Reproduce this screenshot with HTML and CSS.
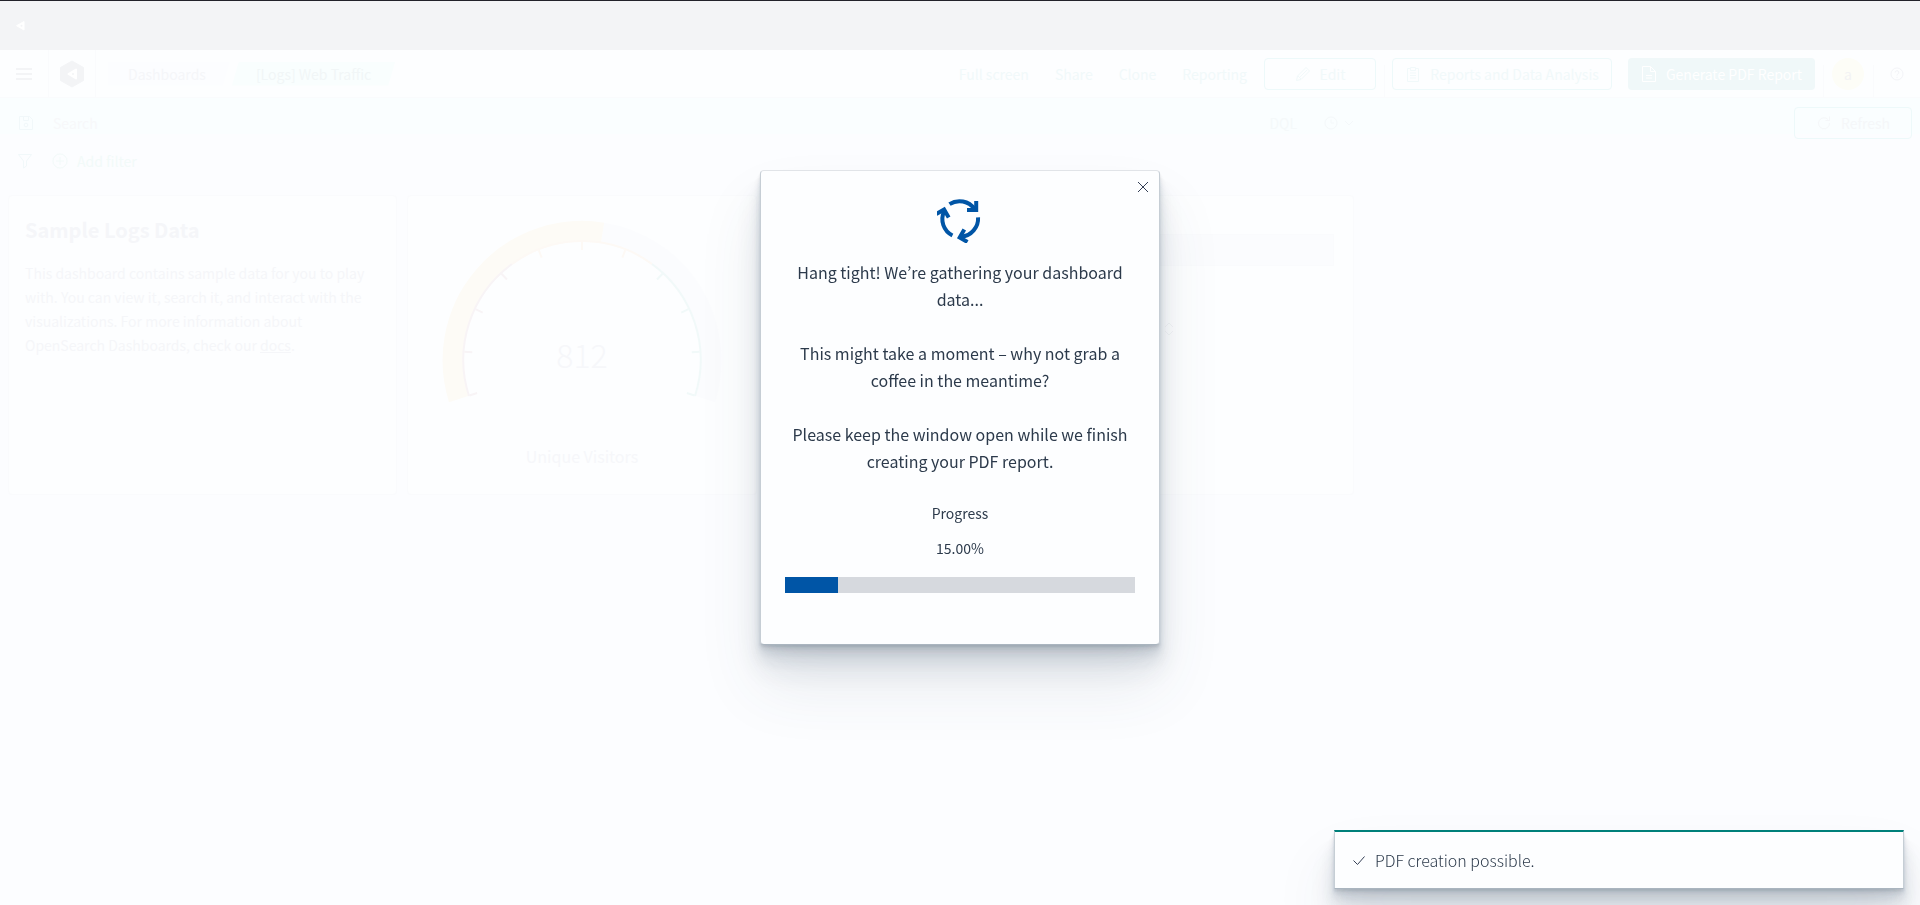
FILE: index.html
```
<!DOCTYPE html>
<html lang="en">
<head>
<meta charset="utf-8">
<title>[Logs] Web Traffic</title>
<link rel="stylesheet" href="styles.css">
</head>
<body>
<div class="page">
  <div class="brandbar">
    <svg width="20" height="20" viewBox="0 0 20 20" aria-hidden="true"><path d="M14 5.500v8.500L6.500 9.700z" fill="#fff" stroke="#fff" stroke-linejoin="round"/><circle cx="11.500" cy="9.700" r="1" fill="#f3f4f6"/></svg>
  </div>
  <header class="header">
    <button class="cell" aria-label="Menu"><svg width="16" height="16" viewBox="0 0 16 16"><path d="M0 3h16M0 8h16M0 13h16" stroke="#f3f4f6" stroke-width="2"/></svg></button>
    <a class="cell logo" href="#" aria-label="Home"><svg width="24" height="28" viewBox="0 0 24 28"><path d="M12 1l11.500 6.500v13L12 27 .5 20.500v-13z" fill="#f3f4f6" stroke="#f3f4f6" stroke-linejoin="round"/><path d="M16 9.500v9L8.500 14z" fill="#fff" stroke="#fff" stroke-width="2" stroke-linejoin="round"/><circle cx="13" cy="14" r="1" fill="#f3f4f6"/></svg></a>
    <nav class="crumbs" aria-label="Breadcrumbs">
      <a class="crumb crumb-first" href="#">Dashboards</a>
      <span class="crumb crumb-last">[Logs] Web Traffic</span>
    </nav>
    <nav class="links" aria-label="Dashboard actions">
      <a href="#">Full screen</a><a href="#">Share</a><a href="#">Clone</a><a href="#">Reporting</a>
    </nav>
    <button class="btn edit"><svg width="16" height="16" viewBox="0 0 16 16"><path d="M1.500 14.500l1-4.500 8.500-8.500 3.500 3.500L6 13.500zM3 10l3 3M4.500 11.500l7.500-7.500" fill="none" stroke="currentColor"/></svg>Edit</button>
    <span class="rule"></span>
    <button class="btn reports"><svg width="16" height="16" viewBox="0 0 16 16"><path d="M5 2.500H2.500v13h11v-13H11M5.500 1.500h5v3h-5zM5 7h6M5 9.500h6M5 12h6" fill="none" stroke="currentColor"/></svg>Reports and Data Analysis</button>
    <button class="btn primary"><svg width="16" height="16" viewBox="0 0 16 16"><path d="M1.500 .5h8l5 5v10h-13zM9.500.5v5h5M5 9.500h6M5 12h6" fill="none" stroke="currentColor"/></svg>Generate PDF Report</button>
    <span class="rule"></span>
    <button class="avatar" aria-label="Account">a</button>
    <span class="rule"></span>
    <button class="cell help" aria-label="Help"><svg width="14" height="14" viewBox="0 0 14 14"><circle cx="7" cy="7" r="6" fill="none" stroke="#f3f4f8"/><path d="M5.200 5.500a1.800 1.800 0 1 1 2.600 1.600Q7 7.500 7 8.500M7 9.800v1.200" fill="none" stroke="#f3f4f8"/></svg></button>
  </header>
  <div class="query">
    <button class="mini" aria-label="Saved queries"><svg width="16" height="16" viewBox="0 0 16 16"><path d="M1.500 1.500h10l3 3v10h-13zM5.500 1.500v4h5v-4" fill="none" stroke="currentColor"/><circle cx="8" cy="10" r="1.800" fill="none" stroke="currentColor"/></svg></button>
    <input class="search" type="text" placeholder="Search" aria-label="Search">
    <button class="dql">DQL</button>
    <button class="time" aria-label="Time range"><svg width="32" height="16" viewBox="0 0 32 16"><circle cx="8" cy="8" r="6" fill="none" stroke="currentColor"/><path d="M8 4.500V8h3M22 6l4 4 4-4" fill="none" stroke="currentColor"/></svg></button>
    <button class="btn refresh"><svg width="16" height="16" viewBox="0 0 16 16"><path d="M12 4.500A5.500 5.500 0 1 0 13.500 8M13.500 1.500v4h-4" fill="none" stroke="currentColor"/></svg>Refresh</button>
  </div>
  <div class="filters">
    <button class="mini" aria-label="Filter options"><svg width="16" height="16" viewBox="0 0 16 16"><path d="M1.500 1.500h13L9.500 8v5l-3 2V8z" fill="none" stroke="currentColor"/></svg></button>
    <button class="add"><svg width="16" height="16" viewBox="0 0 16 16"><circle cx="8" cy="8" r="7" fill="none" stroke="currentColor"/><path d="M8 4v8M4 8h8" stroke="currentColor"/></svg>Add filter</button>
  </div>
  <main class="grid">
    <section class="panel text-panel">
      <h2>Sample Logs Data</h2>
      <p>This dashboard contains sample data for you to play with. You can view it, search it, and interact with the visualizations. For more information about OpenSearch Dashboards, check our <a href="#">docs</a>.</p>
    </section>
    <section class="panel gauge-panel">
      <svg class="gauge" viewBox="-150 -150 300 270" width="300" height="270" role="img" aria-label="Unique Visitors: 812">
        <defs><path id="t" d="M0-118v8"/></defs>
        <path d="M20.500-127A129 129 0 0 1 123 39" fill="none" stroke="#fbfcfe" stroke-width="21"/>
        <path d="M-123 39A129 129 0 0 1 20.500-127" fill="none" stroke="#fdfbf6" stroke-width="21"/>
        <g fill="none" stroke-width="2">
          <g stroke="#f8f4f6"><path d="M-113 36A118.500 118.500 0 0 1-70-96"/><use href="#t" transform="rotate(-107.500)"/><use href="#t" transform="rotate(-86)"/><use href="#t" transform="rotate(-64.500)"/><use href="#t" transform="rotate(-43)"/></g>
          <g stroke="#fdf9f5"><path d="M-70-96A118.500 118.500 0 0 1 70-96"/><use href="#t" transform="rotate(-21.500)"/><use href="#t"/><use href="#t" transform="rotate(21.500)"/></g>
          <g stroke="#f1f9f9"><path d="M70-96A118.500 118.500 0 0 1 113 36"/><use href="#t" transform="rotate(43)"/><use href="#t" transform="rotate(64.500)"/><use href="#t" transform="rotate(86)"/><use href="#t" transform="rotate(107.500)"/></g>
        </g>
        <g fill="#f6f7fa" text-anchor="middle"><text class="gauge-value" y="8">812</text><text class="gauge-label" y="103">Unique Visitors</text></g>
      </svg>
    </section>
    <section class="panel control-panel">
      <div class="control"></div>
      <svg class="sort" width="12" height="14" viewBox="0 0 12 14" aria-hidden="true"><path d="M2 5l4-4 4 4M2 9l4 4 4-4" fill="none" stroke="#f3f5f7"/></svg>
    </section>
  </main>
</div>

<div class="overlay">
  <div class="modal" role="dialog" aria-modal="true" aria-label="Report generation">
    <button class="close" aria-label="Close"><svg width="12" height="12" viewBox="0 0 12 12"><path d="M1 1l10 10M11 1L1 11" stroke="#343f55"/></svg></button>
    <svg class="spinner" width="46" height="46" viewBox="0 0 46 46" aria-hidden="true">
      <defs><g id="arrow"><path d="M12.500 7.200A18.200 18.200 0 0 1 37.500 12" fill="none" stroke="#0055a6" stroke-width="4"/><path d="M37.200 4h4v11H30v-4h7.200z" fill="#0055a6"/></g></defs>
      <use href="#arrow"/><use href="#arrow" transform="rotate(120 23 22)"/><use href="#arrow" transform="rotate(240 23 22)"/>
    </svg>
    <div class="message">
      <p>Hang tight! We’re gathering your dashboard data...</p>
      <p>This might take a moment – why not grab a coffee in the meantime?</p>
      <p>Please keep the window open while we finish creating your PDF report.</p>
    </div>
    <label class="status" for="progress">Progress</label>
    <div class="status">15.00%</div>
    <progress class="bar" id="progress" value="15.2" max="100"></progress>
  </div>
</div>

<div class="toast" role="status">
  <svg width="16" height="16" viewBox="0 0 16 16" aria-hidden="true"><path d="M2.500 8.500l4 4 7-8" fill="none" stroke="#343f55"/></svg>
  <span>PDF creation possible.</span>
</div>
</body>
</html>
```
FILE: styles.css
```
* { box-sizing: border-box; }

body {
  margin: 0;
  min-height: 100vh;
  background: #fcfdff;
  color: #2c3a4b;
  font-family: "Noto Sans CJK JP", "Noto Sans", sans-serif;
  font-size: 14px;
  line-height: 24px;
}

button, input {
  margin: 0;
  padding: 0;
  border: 0;
  background: none;
  color: inherit;
  font: inherit;
}

a { color: inherit; text-decoration: none; }
h2, p { margin: 0; }
svg { display: block; flex: none; }

.page { color: #f5f6f9; }

.brandbar {
  display: flex;
  align-items: center;
  height: 50px;
  padding-left: 10px;
  border-top: 1px solid #22222a;
  background: #f3f4f6;
}

.header {
  display: flex;
  align-items: center;
  height: 48px;
  background: #fdfeff;
  border-bottom: 1px solid #fafbfd;
}

.cell {
  display: flex;
  align-items: center;
  justify-content: center;
  width: 48px;
  height: 48px;
}
.help { width: 46px; }

.logo { border: solid #fafbfd; border-width: 0 1px; }

.crumbs { display: flex; gap: 2px; margin-left: 12px; }
.crumb { height: 24px; padding: 0 24px; }
.crumb-first {
  padding-left: 20px;
  background: #fcfdff;
  clip-path: polygon(0 0, 100% 0, calc(100% - 7px) 100%, 0 100%);
}
.crumb-last {
  background: #f9fefe;
  color: #f1f6f7;
  clip-path: polygon(7px 0, 100% 0, calc(100% - 7px) 100%, 0 100%);
}

.links {
  display: flex;
  gap: 26px;
  margin-left: auto;
  margin-right: 17px;
  color: #f1f9fa;
}

.btn {
  display: flex;
  align-items: center;
  justify-content: center;
  gap: 9px;
  height: 32px;
  border: 1px solid #edf9fa;
  border-radius: 4px;
  color: #f1f9fa;
  white-space: nowrap;
}
.edit { width: 112px; margin-right: 8px; }
.reports { width: 220px; margin-left: 7px; margin-right: 16px; }
.primary { width: 187px; margin-right: 8px; border: 0; background: #f0f8f9; color: #fff; }

.rule { width: 1px; height: 32px; align-self: flex-end; background: #fafbfd; }

.avatar {
  width: 32px;
  height: 32px;
  margin: 0 9px 0 8px;
  border-radius: 50%;
  background: #fdfdf7;
  color: #f3f3f4;
}

.query {
  display: flex;
  align-items: center;
  height: 49px;
  padding: 0 8px 0 18px;
  background: linear-gradient(#fafeff 0 36px, #fcfdff 36px);
}
.mini { color: #f1f8fa; }
.search { flex: 1; min-width: 0; margin-left: 19px; }
.search::placeholder { color: #f7f8fa; opacity: 1; }
.dql { color: #f5f9fa; margin-right: 26px; }
.time { color: #f4f8fa; margin-right: 439px; }
.refresh { width: 118px; color: #f5f7f9; }

.filters {
  display: flex;
  align-items: center;
  gap: 19px;
  height: 28px;
  padding-left: 17px;
}
.add { display: flex; align-items: center; gap: 9px; color: #f2faf9; }

.grid {
  display: grid;
  grid-template-columns: 389fr 350fr 587fr 548fr;
  gap: 10px;
  padding: 20px 8px;
}

.panel {
  min-height: 300px;
  background: #fdfeff;
  border: 1px solid #fafbfd;
  border-radius: 4px;
}

.text-panel { padding: 20px 16px; }
.text-panel h2 { margin-bottom: 17px; font-size: 20px; line-height: 28px; font-weight: 700; }
.text-panel a { text-decoration: underline; }

.gauge-panel { display: flex; justify-content: center; padding-top: 14px; }
.gauge-value { font-size: 32px; font-weight: 300; }
.gauge-label { font-size: 16px; }

.control-panel { padding: 38px 19px; }
.control { height: 32px; background: #fbfcfe; border: 1px solid #fafbfd; }
.sort { margin: 56px auto 0 376px; }

.overlay {
  position: fixed;
  inset: 0;
  display: flex;
  align-items: flex-start;
  justify-content: center;
  padding-top: 170px;
}

.modal, .toast {
  border: 1px solid #c6ced5;
  border-bottom-color: #aab5bf;
  background: #fdfeff;
  box-shadow:
    0 40px 64px 0 rgba(58, 78, 98, .1),
    0 24px 32px 0 rgba(58, 78, 98, .1),
    0 16px 16px 0 rgba(58, 78, 98, .1),
    0 8px 8px 0 rgba(58, 78, 98, .1),
    0 4px 4px 0 rgba(58, 78, 98, .1),
    0 2px 2px 0 rgba(58, 78, 98, .1);
}

.modal {
  position: relative;
  width: 400px;
  padding: 26px 24px 51px;
  border-top-color: #e1e4e8;
  border-radius: 4px;
  text-align: center;
}

.close { position: absolute; top: 10px; right: 10px; }
.spinner { margin: 0 auto 16px; }

.message {
  display: grid;
  gap: 27px;
  margin-bottom: 26px;
  font-size: 16px;
  line-height: 27px;
}

.status {
  display: block;
  margin-bottom: 11px;
  font-size: 14px;
  line-height: 24px;
}

.bar {
  display: block;
  width: 100%;
  height: 16px;
  margin-top: 17px;
  border: 0;
  appearance: none;
  background: #d6d9de;
}
.bar::-webkit-progress-bar { background: #d6d9de; }
.bar::-webkit-progress-value { background: #0055a6; }

.toast {
  position: fixed;
  right: 16px;
  bottom: 16px;
  display: flex;
  align-items: center;
  gap: 8px;
  width: 570px;
  height: 59px;
  padding: 0 16px;
  border-top: 2px solid #00807a;
  font-size: 16px;
  font-weight: 200;
}
```
